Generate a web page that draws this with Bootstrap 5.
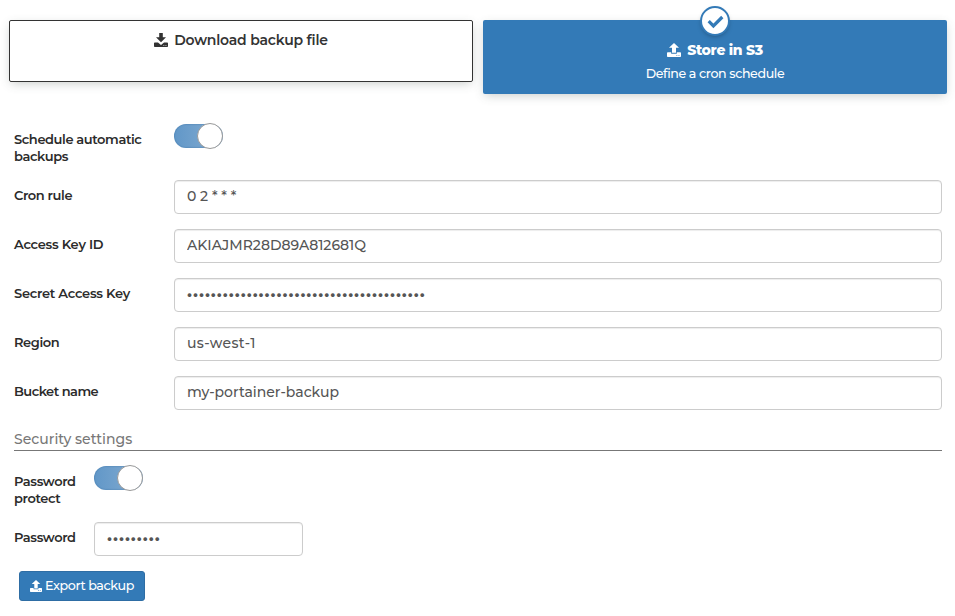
<!DOCTYPE html>
<html lang="en">
<head>
<meta charset="utf-8">
<meta name="viewport" content="width=device-width, initial-scale=1">
<title>Backup configuration</title>
<link href="https://cdn.jsdelivr.net/npm/bootstrap@5.3.0/dist/css/bootstrap.min.css" rel="stylesheet">
<style>
body{font-family:Montserrat,Inter,"Liberation Sans",sans-serif;font-size:13px;line-height:17px;color:#333;background:#fff}
.page{padding:20px 8px 0 9px}
.choices{gap:10px}
.choice{border-radius:2px;box-shadow:0 3px 10px -2px rgba(62,76,70,.3);font-size:14px;line-height:20px}
.choice svg{width:14px;height:14px}
.choice-plain{height:62px;border:1px solid #333;padding-top:9px}
.choice-on{height:74px;background:#337ab7;color:#fff;padding-top:20px}
.choice-title{font-weight:600;letter-spacing:-.2px;gap:6px}
.choice-on .choice-title{font-weight:800;letter-spacing:-.33px}
.choice-note{font-size:12.6px;font-weight:500;line-height:18px;margin-top:5px;letter-spacing:-.38px}
.tick{position:absolute;top:-14px;left:50%;width:30px;height:30px;margin-left:-15px;border:2px solid #337ab7;border-radius:50%;background:#fff;color:#337ab7;box-shadow:0 2px 5px -2px rgba(0,0,0,.35)}
.choice .tick svg{width:17px;height:17px}
.fields{margin:22px 5px 0}
.field-label{width:160px;font-weight:600;padding-top:7px;flex:none;letter-spacing:-.4px;color:#2b2b2b}
.field-label.wide{letter-spacing:-.28px}
.field-label.tight{letter-spacing:-.53px}
.field-label.slim{width:80px}
.field-label.two-line{padding-top:15px}
.slim.two-line{padding-top:16px}
.field{margin-bottom:15px}
.field .form-control{height:34px;padding:4px 12px 6px;font-size:14px;font-weight:500;line-height:20px;color:#555;border:1px solid #ccc;border-radius:4px;box-shadow:inset 0 1px 1px rgba(0,0,0,.075)}
.field .form-control[type=password]{font-size:13px;font-weight:800;letter-spacing:.9px;padding-bottom:7px}
.field .form-control.loose{letter-spacing:.36px}
.form-control.pw{width:209px}
.toggle{width:49px;height:24px;border-radius:24px;background:linear-gradient(90deg,#6197c8,#75a3cd 55%);box-shadow:inset 0 0 1px 1px rgba(40,95,145,.2);margin-top:8px}
.toggle i{width:26px;height:26px;margin-top:-1px;border-radius:50%;background:#fff;border:1px solid #999}
.slim + .toggle{margin-top:9px}
.section-title{font-size:14px;font-weight:500;line-height:20px;color:#777;border-bottom:1px solid #777;padding-bottom:1px;margin:19px 0 6px}
.btn-export{background:#337ab7;border:1px solid #2e6da4;border-radius:3px;color:#fff;font-size:12.7px;font-weight:500;letter-spacing:-.42px;width:126px;height:30px;padding:0 0 1px;margin-left:5px;gap:3px}
.btn-export svg{width:12px;height:12px}
</style>
<script src="https://cdn.jsdelivr.net/npm/bootstrap@5.3.0/dist/js/bootstrap.bundle.min.js"></script>
</head>
<body>
<svg class="d-none" xmlns="http://www.w3.org/2000/svg">
  <symbol id="ic-down" viewBox="0 0 14 14"><path fill="currentColor" fill-rule="evenodd" d="M5.200 0h3.600v4.200h3.200L7 9.200 2 4.200h3.200zM0 10.200q0-.8.8-.8h3.200L7 12l3-2.600h3.200q.8 0 .8.8v3q0 .8-.8.8H.8q-.8 0-.8-.8zM9.400 12v.8h.9V12zM11.500 12v.8h.9V12z"/></symbol>
  <symbol id="ic-up" viewBox="0 0 14 14"><path fill="currentColor" fill-rule="evenodd" d="M7 0l5 4.800H9v5H5v-5H2zM0 10q0-.8.8-.8h3.400v1.500h5.600V9.200h3.400q.8 0 .8.8v3.200q0 .8-.8.8H.8q-.8 0-.8-.8zM9.400 12v.8h.9V12zM11.500 12v.8h.9V12z"/></symbol>
  <symbol id="ic-check" viewBox="0 0 17 17"><path fill="none" stroke="currentColor" stroke-width="3.200" d="M1.700 8.200l4.700 4.700L15.300 4"/></symbol>
</svg>
<main class="page">
  <div class="choices d-flex align-items-start text-center">
    <div class="choice choice-plain w-50">
      <div class="choice-title d-flex justify-content-center align-items-center"><svg><use href="#ic-down"/></svg><span>Download backup file</span></div>
    </div>
    <div class="choice choice-on w-50 position-relative">
      <div class="tick d-flex align-items-center justify-content-center"><svg><use href="#ic-check"/></svg></div>
      <div class="choice-title d-flex justify-content-center align-items-center"><svg><use href="#ic-up"/></svg><span>Store in S3</span></div>
      <div class="choice-note">Define a cron schedule</div>
    </div>
  </div>
  <form class="fields">
    <div class="field d-flex"><label class="field-label two-line">Schedule automatic<br>backups</label><span class="toggle d-flex justify-content-end"><i></i></span></div>
    <div class="field d-flex"><label class="field-label">Cron rule</label><input class="form-control" value="0 2 * * *"></div>
    <div class="field d-flex"><label class="field-label wide">Access Key ID</label><input class="form-control" value="AKIAJMR28D89A812681Q"></div>
    <div class="field d-flex"><label class="field-label wide">Secret Access Key</label><input type="password" class="form-control" value="0123456789012345678901234567890123456789"></div>
    <div class="field d-flex"><label class="field-label">Region</label><input class="form-control loose" value="us-west-1"></div>
    <div class="field d-flex"><label class="field-label tight">Bucket name</label><input class="form-control" value="my-portainer-backup"></div>
    <div class="section-title">Security settings</div>
    <div class="field d-flex"><label class="field-label slim two-line">Password<br>protect</label><span class="toggle d-flex justify-content-end"><i></i></span></div>
    <div class="field d-flex"><label class="field-label slim">Password</label><input type="password" class="form-control pw" value="012345678"></div>
    <button type="button" class="btn btn-export d-flex align-items-center justify-content-center"><svg><use href="#ic-up"/></svg><span>Export backup</span></button>
  </form>
</main>
</body>
</html>
